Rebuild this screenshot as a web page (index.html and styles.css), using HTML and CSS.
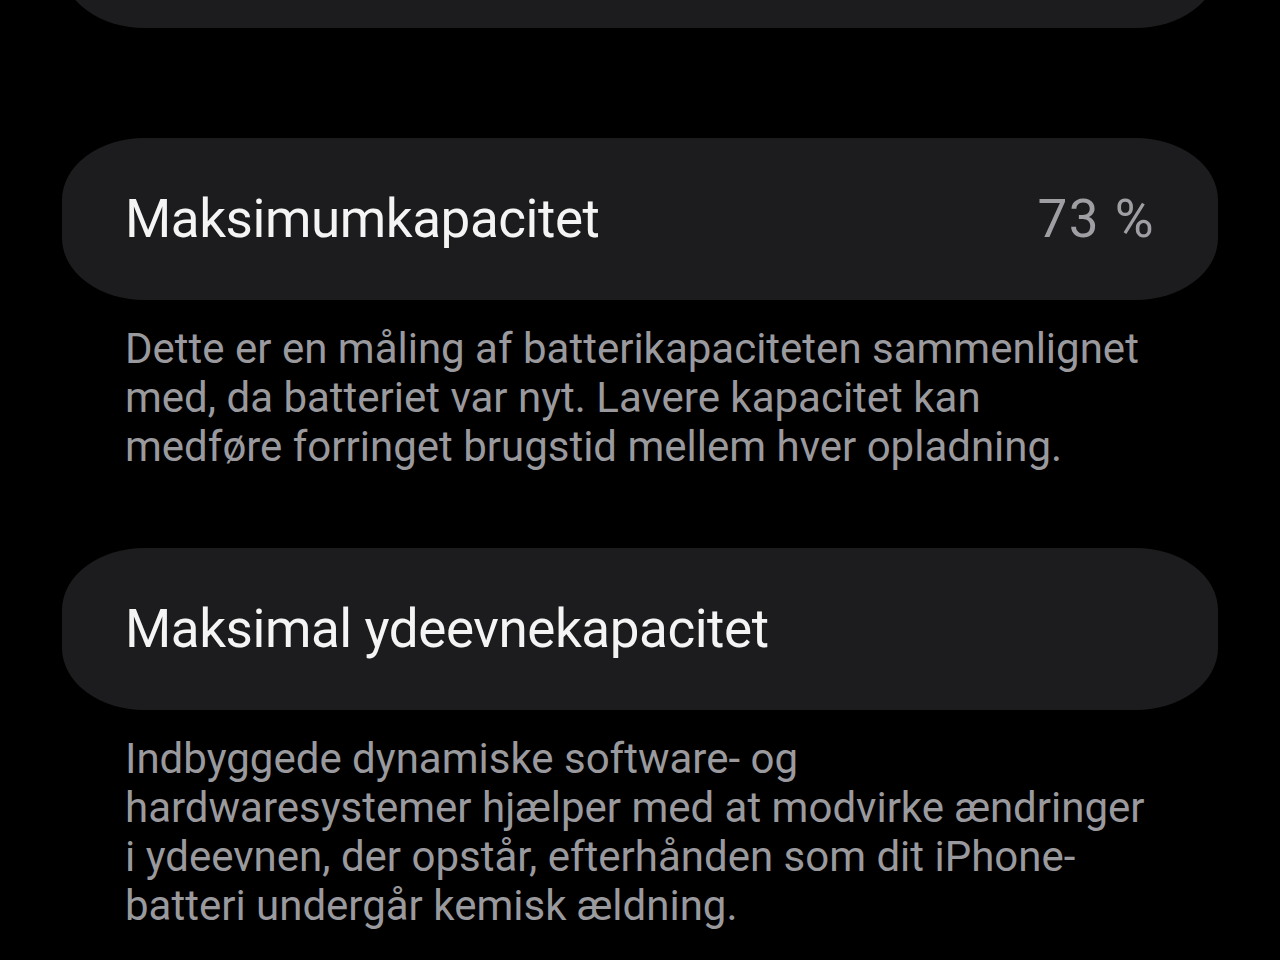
FILE: index.html
```html
<!DOCTYPE html>
<html lang="da">
<head>
    <meta charset="UTF-8">
    <meta name="viewport" content="width=device-width, initial-scale=1.0">
    <title>Batteritilstand</title>
    <link rel="stylesheet" href="styles.css">
</head>
<body>
    <div class="settings">
        <div class="cell cell-prev"></div>

        <div class="cell">
            <span class="cell-title">Maksimumkapacitet</span>
            <span class="cell-value">73 %</span>
        </div>
        <p class="footer">Dette er en måling af batterikapaciteten sammenlignet med, da batteriet var nyt. Lavere kapacitet kan medføre forringet brugstid mellem hver opladning.</p>

        <div class="cell">
            <span class="cell-title">Maksimal ydeevnekapacitet</span>
        </div>
        <p class="footer">Indbyggede dynamiske software- og hardwaresystemer hjælper med at modvirke ændringer i ydeevnen, der opstår, efterhånden som dit iPhone-batteri undergår kemisk ældning.</p>
    </div>
</body>
</html>
```

FILE: styles.css
```css
html, body {
    margin: 0;
    background: #000;
}
body {
    font-family: 'Roboto', 'Noto Sans', sans-serif;
    color: #f4f4f5;
    overflow: hidden;
    height: 960px;
}
.settings {
    width: 1156px;
    margin-left: 62px;
}
.cell {
    height: 162px;
    background: #1c1c1e;
    border-radius: 82px / 62px;
    display: flex;
    align-items: center;
    justify-content: space-between;
    padding: 0 63px;
}
/* the group above, scrolled mostly out of view */
.cell-prev {
    margin-top: -134px;
    margin-bottom: 110px;
}
.cell-title {
    font-size: 53px;
    letter-spacing: -0.45px;
}
.cell-value {
    font-size: 53px;
    color: #9e9ea3;
    letter-spacing: 1.5px;
}
.footer {
    margin: 24px 0 77px;
    padding: 0 73px 0 63px;
    font-size: 42px;
    line-height: 49px;
    color: #9a9a9e;
}
```
